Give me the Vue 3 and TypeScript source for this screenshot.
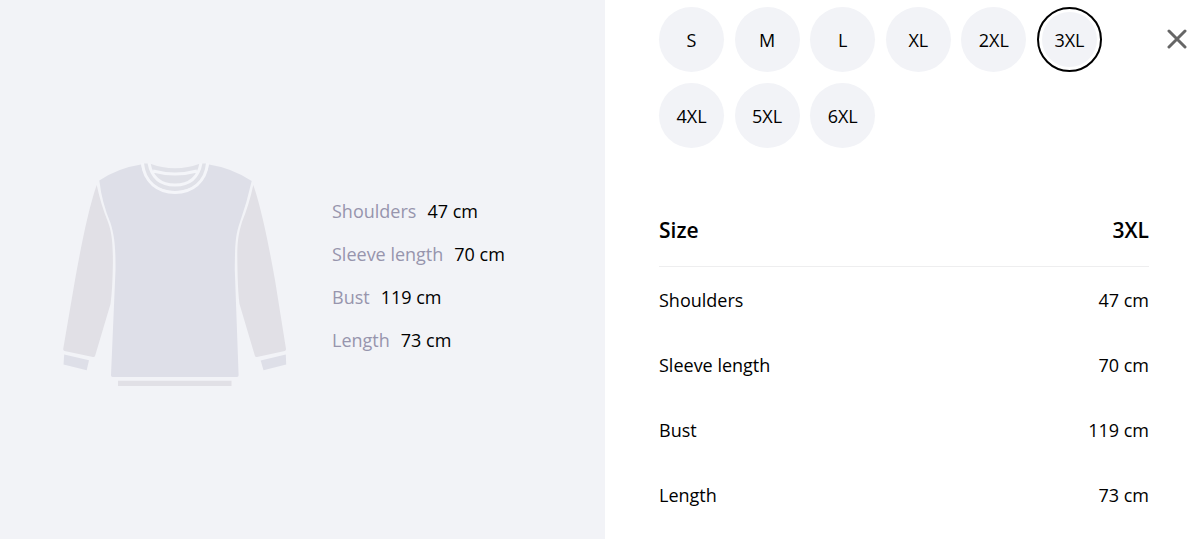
<script setup lang="ts">
import { computed, ref } from 'vue'

interface Measurement {
  label: string
  value: number
}

const sizes: string[] = ['S', 'M', 'L', 'XL', '2XL', '3XL', '4XL', '5XL', '6XL']
const selected = ref<string>('3XL')
const open = ref<boolean>(true)

const chart: Record<string, number[]> = {
  S: [41, 67, 99, 67],
  M: [42, 68, 103, 68],
  L: [43, 68, 107, 69],
  XL: [44, 69, 111, 70],
  '2XL': [46, 69, 115, 72],
  '3XL': [47, 70, 119, 73],
  '4XL': [48, 70, 123, 74],
  '5XL': [49, 71, 127, 75],
  '6XL': [50, 71, 131, 76],
}
const labels: string[] = ['Shoulders', 'Sleeve length', 'Bust', 'Length']

const measurements = computed<Measurement[]>(() =>
  labels.map((label, i) => ({ label, value: chart[selected.value][i] })),
)
</script>

<template>
  <main v-if="open" class="guide">
    <section class="preview">
      <svg class="garment" viewBox="62 163 226 226" aria-hidden="true">
        <g class="light">
          <path d="M96.7 185C88 210 80 252 75 280L63.2 349Q63 350.5 64.5 351L93 357Q94.7 357.3 95.2 355.5L110.5 304Q112.5 290 112.9 263C112.9 240 111.5 232 108 222Q101 205 96.7 185Z" />
          <path d="M253.3 185C262 210 270 252 275 280L286 349Q286.2 350.5 284.8 351L257 357Q255.3 357.3 254.8 355.5L239.5 304Q237.5 290 237.3 255C237.3 240 239 232 242 222Q249 205 253.3 185Z" />
          <path d="M118 380.7H231.5V386H118Z" />
        </g>
        <g class="fabric">
          <path d="M99.3 180.5Q118 168 141 164.5C145 183 158 193 175 193C192 193 205 183 209 164.5Q232 168 251.7 181Q247 202 240 222C235.5 235 235 243 234.8 270L238.6 375Q238.7 377 237 377H112.5Q110.9 377 111 375L115.5 270C115.7 247 114.5 236 110.5 223Q102 203 99.3 180.5Z" />
          <path d="M64.2 354.5L89 360.2L86.7 370.2L63.5 364.5Z" />
          <path d="M285.8 354.5L260.7 360.5L263.5 370.2L286.2 364.5Z" />
        </g>
        <path class="collar" d="M143.5 163.5H149.5Q175 173 200.5 163.5H206.5C205 182 192 191 175 191C158 191 145 182 143.5 163.5Z" />
        <path class="seam" d="M142.5 163C144 182 158 192.5 175 192.5C192 192.5 206 182 207.5 163M149 163C151.5 177 160 185 175 185C190 185 198.5 177 201 163M153 171Q175 177 197 171" />
      </svg>
      <dl class="summary">
        <div v-for="item in measurements" :key="item.label" class="summary-row">
          <dt>{{ item.label }}</dt>
          <dd>{{ item.value }} cm</dd>
        </div>
      </dl>
    </section>

    <section class="details">
      <div class="sizes" role="group" aria-label="Size">
        <button
          v-for="size in sizes"
          :key="size"
          type="button"
          class="size"
          :class="{ active: size === selected }"
          :aria-pressed="size === selected"
          @click="selected = size"
        >{{ size }}</button>
      </div>
      <table class="chart">
        <thead>
          <tr>
            <th scope="col">Size</th>
            <th scope="col">{{ selected }}</th>
          </tr>
        </thead>
        <tbody>
          <tr v-for="item in measurements" :key="item.label">
            <th scope="row">{{ item.label }}</th>
            <td>{{ item.value }} cm</td>
          </tr>
        </tbody>
      </table>
      <button type="button" class="close" aria-label="Close" @click="open = false">
        <svg viewBox="0 0 20 20" aria-hidden="true"><path d="M2 2L18 18M18 2L2 18" /></svg>
      </button>
    </section>
  </main>
</template>

<style>
body {
  margin: 0;
  background: #fff;
}
</style>

<style scoped>
.guide {
  display: grid;
  grid-template-columns: 605fr 590fr;
  min-height: 100vh;
  color: #000;
  font-family: 'Segoe UI', 'Open Sans', 'Noto Sans', sans-serif;
  font-size: 18px;
  line-height: 24px;
}
.preview {
  display: flex;
  align-items: center;
  gap: 44px;
  box-sizing: border-box;
  padding: 12px 24px 0 62px;
  background: #f2f3f7;
}
.garment {
  flex: none;
  width: 226px;
  height: 226px;
}
.light {
  fill: #e1e0e6;
}
.fabric {
  fill: #dedfe8;
}
.collar {
  fill: #e0e1e8;
}
.seam {
  fill: none;
  stroke: #f4f5f9;
  stroke-width: 3;
}
.summary {
  display: grid;
  gap: 19px;
  margin: 0;
}
.summary-row {
  display: flex;
  gap: 11px;
  white-space: nowrap;
}
.summary dt {
  color: #9795ad;
}
.summary dd {
  margin: 0;
}
.details {
  position: relative;
  box-sizing: border-box;
  padding: 7px 46px 12px 54px;
}
.sizes {
  display: grid;
  grid-template-columns: repeat(6, 65px);
  justify-content: space-between;
  row-gap: 11px;
  max-width: 443px;
}
.size {
  height: 65px;
  padding: 0;
  border: 0;
  border-radius: 50%;
  background: #f2f3f7;
  color: #000;
  font: inherit;
  cursor: pointer;
}
.size.active {
  border: 2px solid #000;
  box-shadow: inset 0 0 0 3px #fff;
}
.chart {
  width: 100%;
  margin-top: 45px;
  border-collapse: separate;
  border-spacing: 0;
}
.chart th,
.chart td {
  height: 65px;
  padding: 0;
  font-weight: 400;
  text-align: left;
}
.chart th:last-child,
.chart td:last-child {
  text-align: right;
}
.chart thead th {
  height: 73px;
  border-bottom: 1px solid #eeeeef;
  font-size: 21px;
  font-weight: 600;
}
.close {
  position: absolute;
  top: 29px;
  right: 8px;
  width: 20px;
  height: 20px;
  padding: 0;
  border: 0;
  background: none;
  cursor: pointer;
}
.close svg {
  display: block;
  width: 20px;
  height: 20px;
  fill: none;
  stroke: #666;
  stroke-width: 3;
  stroke-linecap: round;
}
</style>
